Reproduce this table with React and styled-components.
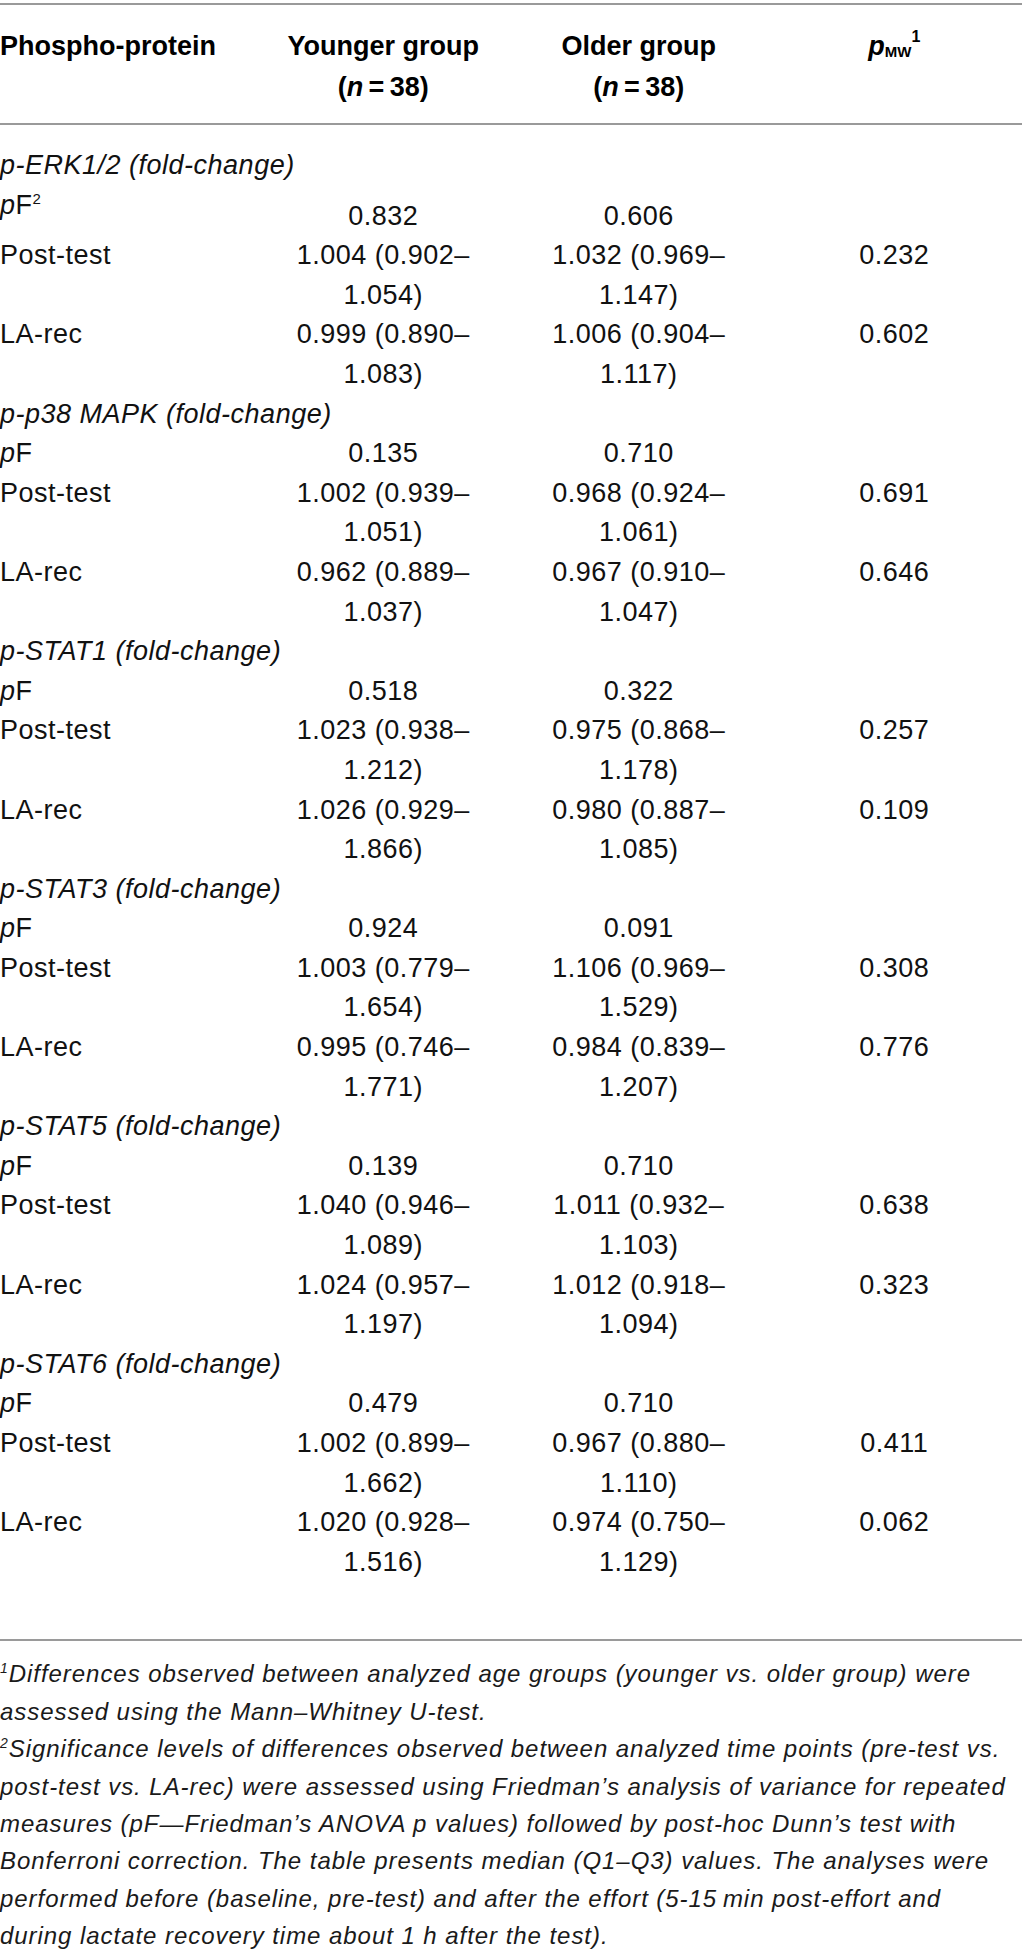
import React, { Fragment } from "react";
import styled, { createGlobalStyle } from "styled-components";

const GlobalStyle = createGlobalStyle`
    body {
        margin: 0;
        background: #FFFFFF;
        font-family: "Liberation Sans", Arial, sans-serif;
        color: #111111;
    }
`;

const Page = styled.div`
    width: 1022px;
    padding-top: 3px;
`;

const Table = styled.section`
    border-top: 2px solid #9A9A9A;
    border-bottom: 2px solid #9A9A9A;
`;

const HeadRow = styled.div`
    display: grid;
    grid-template-columns: repeat(4, 1fr);
    padding: 21px 0 15px;
    border-bottom: 2px solid #9A9A9A;
    font-weight: bold;
    font-size: 27px;
    line-height: 41px;
    color: #000000;
`;

const HeadCell = styled.div`
    text-align: ${props => (props.$left ? "left" : "center")};
`;

const Sub = styled.sub`
    font-size: 15px;
    vertical-align: -2px;
    line-height: 0;
`;

const Sup = styled.sup`
    font-size: ${props => props.$size || 15}px;
    line-height: 0;
    vertical-align: ${props => props.$raise || 11}px;
`;

const Body = styled.div`
    padding: 21px 0 57px;
`;

const Row = styled.div`
    display: grid;
    grid-template-columns: repeat(4, 1fr);
    font-size: 27px;
    line-height: 39.6px;
    letter-spacing: 0.5px;
`;

const Label = styled.div`
    text-align: left;
    font-style: ${props => (props.$italic ? "italic" : "normal")};
    white-space: nowrap;
`;

const Value = styled.div`
    text-align: center;
    padding-top: ${props => props.$drop || 0}px;
`;

const Notes = styled.div`
    padding: 14px 12px 0 0;
    font-style: italic;
    font-size: 24px;
    line-height: 37.4px;
    letter-spacing: 0.95px;
    color: #1A1A1A;
`;

const Note = styled.p`
    margin: 0;
`;

const groups = [
    {
        name: "p-ERK1/2",
        note: true,
        pf: ["0.832", "0.606"],
        post: [["1.004", "0.902", "1.054"], ["1.032", "0.969", "1.147"], "0.232"],
        rec: [["0.999", "0.890", "1.083"], ["1.006", "0.904", "1.117"], "0.602"],
    },
    {
        name: "p-p38 MAPK",
        pf: ["0.135", "0.710"],
        post: [["1.002", "0.939", "1.051"], ["0.968", "0.924", "1.061"], "0.691"],
        rec: [["0.962", "0.889", "1.037"], ["0.967", "0.910", "1.047"], "0.646"],
    },
    {
        name: "p-STAT1",
        pf: ["0.518", "0.322"],
        post: [["1.023", "0.938", "1.212"], ["0.975", "0.868", "1.178"], "0.257"],
        rec: [["1.026", "0.929", "1.866"], ["0.980", "0.887", "1.085"], "0.109"],
    },
    {
        name: "p-STAT3",
        pf: ["0.924", "0.091"],
        post: [["1.003", "0.779", "1.654"], ["1.106", "0.969", "1.529"], "0.308"],
        rec: [["0.995", "0.746", "1.771"], ["0.984", "0.839", "1.207"], "0.776"],
    },
    {
        name: "p-STAT5",
        pf: ["0.139", "0.710"],
        post: [["1.040", "0.946", "1.089"], ["1.011", "0.932", "1.103"], "0.638"],
        rec: [["1.024", "0.957", "1.197"], ["1.012", "0.918", "1.094"], "0.323"],
    },
    {
        name: "p-STAT6",
        pf: ["0.479", "0.710"],
        post: [["1.002", "0.899", "1.662"], ["0.967", "0.880", "1.110"], "0.411"],
        rec: [["1.020", "0.928", "1.516"], ["0.974", "0.750", "1.129"], "0.062"],
    },
];

// median (Q1–Q3), broken after the dash like the printed table
const Median = ({ v }) => (
    <Value>
        {v[0]} ({v[1]}–<br />
        {v[2]})
    </Value>
);

const TimeRow = ({ label, data }) => (
    <Row>
        <Label>{label}</Label>
        <Median v={data[0]} />
        <Median v={data[1]} />
        <Value>{data[2]}</Value>
    </Row>
);

const Group = ({ g }) => (
    <Fragment>
        <Row>
            <Label $italic>{g.name} (fold-change)</Label>
        </Row>
        <Row>
            <Label>
                <i>p</i>F{g.note && <Sup $size={15} $raise={10}>2</Sup>}
            </Label>
            <Value $drop={g.note ? 11 : 0}>{g.pf[0]}</Value>
            <Value $drop={g.note ? 11 : 0}>{g.pf[1]}</Value>
            <Value />
        </Row>
        <TimeRow label="Post-test" data={g.post} />
        <TimeRow label="LA-rec" data={g.rec} />
    </Fragment>
);

const PhosphoTable = () => {
    return (
        <Page>
            <GlobalStyle />
            <Table>
                <HeadRow>
                    <HeadCell $left>Phospho-protein</HeadCell>
                    <HeadCell>
                        Younger group
                        <br />(<i>n</i>{"\u2009=\u2009"}38)
                    </HeadCell>
                    <HeadCell>
                        Older group
                        <br />(<i>n</i>{"\u2009=\u2009"}38)
                    </HeadCell>
                    <HeadCell>
                        <i>p</i>
                        <Sub>MW</Sub>
                        <Sup $size={16} $raise={13}>1</Sup>
                    </HeadCell>
                </HeadRow>
                <Body>
                    {groups.map(g => (
                        <Group key={g.name} g={g} />
                    ))}
                </Body>
            </Table>
            <Notes>
                <Note>
                    <Sup $size={14} $raise={9}>1</Sup>Differences observed between analyzed age groups
                    (younger vs. older group) were assessed using the Mann–Whitney U-test.
                </Note>
                <Note>
                    <Sup $size={14} $raise={9}>2</Sup>Significance levels of differences observed between
                    analyzed time points (pre-test vs. post-test vs. LA-rec) were assessed using
                    Friedman’s analysis of variance for repeated measures (pF—Friedman’s ANOVA p values)
                    followed by post-hoc Dunn’s test with Bonferroni correction. The table presents
                    median (Q1–Q3) values. The analyses were performed before (baseline, pre-test) and
                    after the effort (5-15{"\u2009"}min post-effort and during lactate recovery time about
                    1 h after the test).
                </Note>
            </Notes>
        </Page>
    );
};

export default PhosphoTable;
